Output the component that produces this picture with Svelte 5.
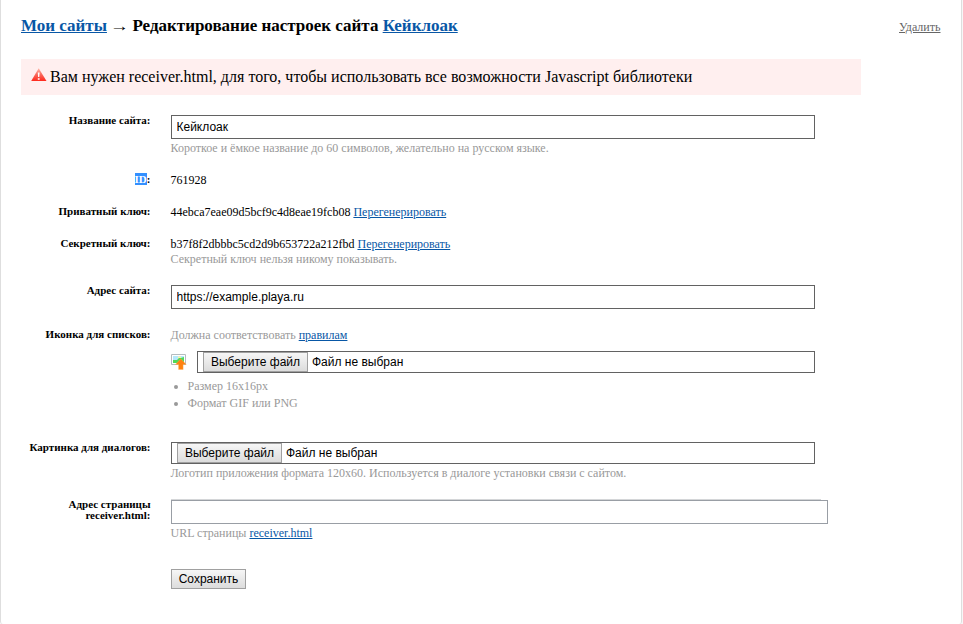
<script>
  let name = $state('Кейклоак');
  let address = $state('https://example.playa.ru');
  let receiver = $state('');
</script>

{#snippet filePicker()}
  <div class="file">
    <button type="button" class="btn choose">Выберите файл</button>
    <span class="nofile">Файл не выбран</span>
  </div>
{/snippet}

<main>
  <header>
    <h1><a href="#sites">Мои сайты</a> <span class="arrow">→</span> Редактирование настроек сайта <a href="#site">Кейклоак</a></h1>
    <a class="delete" href="#delete">Удалить</a>
  </header>

  <div class="alert">
    <svg width="16" height="14" viewBox="0 0 16 14">
      <defs>
        <linearGradient id="warn" x1="0" y1="0" x2="0" y2="1">
          <stop offset="0" stop-color="#ffb8a8" />
          <stop offset=".45" stop-color="#f96e62" />
          <stop offset="1" stop-color="#ff291c" />
        </linearGradient>
      </defs>
      <path d="M7.7.3 15.5 13H.2Z" fill="url(#warn)" />
      <path d="M6.8 4.5h1.8l-.3 4.6H7.1ZM6.8 10.2h1.8v1.6H6.8Z" fill="#fff" />
    </svg>
    <span class="message">Вам нужен receiver.html, для того, чтобы использовать все возможности Javascript библиотеки</span>
  </div>

  <form>
    <div class="row r1">
      <label for="name">Название сайта:</label>
      <div class="field">
        <input id="name" type="text" bind:value={name} />
        <p class="hint">Короткое и ёмкое название до 60 символов, желательно на русском языке.</p>
      </div>
    </div>
    <div class="row r2">
      <span class="label"><mark>ID</mark>:</span>
      <div class="field"><p>761928</p></div>
    </div>
    <div class="row r3">
      <span class="label">Приватный ключ:</span>
      <div class="field"><p>44ebca7eae09d5bcf9c4d8eae19fcb08 <a href="#private">Перегенерировать</a></p></div>
    </div>
    <div class="row r4">
      <span class="label">Секретный ключ:</span>
      <div class="field">
        <p>b37f8f2dbbbc5cd2d9b653722a212fbd <a href="#secret">Перегенерировать</a></p>
        <p class="hint">Секретный ключ нельзя никому показывать.</p>
      </div>
    </div>
    <div class="row r5">
      <label for="address">Адрес сайта:</label>
      <div class="field"><input id="address" type="text" bind:value={address} /></div>
    </div>
    <div class="row r6">
      <span class="label">Иконка для списков:</span>
      <div class="field">
        <p class="hint">Должна соответствовать <a href="#rules">правилам</a></p>
        <div class="upload">
          <svg width="17" height="16" viewBox="0 0 17 16">
            <path d="M.5.5h14v10H.5Z" fill="#fff" stroke="#b4bcbf" />
            <path d="M2 2h11v7H2Z" fill="#b4e9fb" />
            <path d="M2 6h4l2-2h2l3-1v6H2Z" fill="#4fd957" />
            <path d="M7 2.5h3V4H7Z" fill="#fff3a0" />
            <path d="M9.7 4.8 15.2 10.4h-3.1v5.2H7.6v-5.2H4.5Z" fill="#ff8210" stroke="#ffad55" stroke-width=".4" />
          </svg>
          {@render filePicker()}
        </div>
        <ul>
          <li>Размер 16x16px</li>
          <li>Формат GIF или PNG</li>
        </ul>
      </div>
    </div>
    <div class="row r7">
      <span class="label">Картинка для диалогов:</span>
      <div class="field">
        {@render filePicker()}
        <p class="hint">Логотип приложения формата 120x60. Используется в диалоге установки связи с сайтом.</p>
      </div>
    </div>
    <div class="row r8">
      <label for="receiver">Адрес страницы<br />receiver.html:</label>
      <div class="field">
        <div class="rule"></div>
        <input id="receiver" class="wide" type="text" bind:value={receiver} />
        <p class="hint">URL страницы <a href="#receiver">receiver.html</a></p>
      </div>
    </div>
    <button type="button" class="btn save">Сохранить</button>
  </form>
</main>

<style>
  :global(body) { margin: 0; background: #f7f7f7; overflow: hidden; }
  main {
    box-sizing: border-box;
    width: 962px;
    height: 624px;
    padding: 0 20px;
    border: solid #dedede;
    border-width: 0 1px;
    border-radius: 0 0 3px 3px;
    background: #fff;
    color: #000;
    font: 12px/15px "Liberation Serif", "Times New Roman", serif;
  }
  a { color: #0857a6; text-decoration: underline; }
  header { display: flex; justify-content: space-between; height: 59px; }
  h1 { margin: 15px 0 0; font-size: 17px; line-height: 22px; letter-spacing: -.008px; white-space: nowrap; }
  .arrow { display: inline-block; font-weight: 400; transform: scale(1.12, .9); }
  .delete { margin: 20px .5px 0 0; color: #666; }
  .alert {
    display: flex;
    box-sizing: border-box;
    width: 840px;
    height: 36px;
    padding: 9px 10px 0;
    background: #ffefef;
    font-size: 16px;
    line-height: 18px;
    letter-spacing: .006px;
    white-space: nowrap;
  }
  .alert svg { margin-right: 3px; }
  form { margin-top: 20px; }
  .row { display: flex; gap: 20.5px; }
  label, .label { width: 129.5px; font-size: 11px; line-height: 11px; font-weight: 700; text-align: right; }
  mark { background: #3390ff; color: #fff; }
  .r1 { height: 59px; }
  .r2, .r3 { height: 32px; }
  .r4 { height: 47px; }
  .r5 { height: 44px; }
  .r6 { height: 113px; }
  .r7 { height: 57px; }
  .r8 { height: 70px; }
  p { margin: 0 0 0 -.5px; white-space: nowrap; }
  .hint, ul { color: #999; }
  .r1 .hint { margin-top: 2px; }
  .field { width: 644px; }
  .r2 .field, .r3 .field, .r4 .field, .r6 .field { margin-top: -1px; }
  input {
    display: block;
    box-sizing: border-box;
    width: 644px;
    height: 24px;
    margin: 0;
    padding: 0 4.5px;
    border: 1px solid #626262;
    border-radius: 0;
    outline: 0;
    background: #fff;
    color: #000;
    font: 12px "Liberation Sans", Arial, sans-serif;
  }
  .rule { width: 650px; height: 1px; background: #d4d6d8; }
  .wide { width: 657px; border-color: #999ea5; }
  .r7 .hint, .r8 .hint { margin-top: 2px; }
  .r6 .hint { height: 23px; }
  .upload { display: flex; gap: 9px; }
  .upload svg { flex: none; margin-top: 3px; }
  .file {
    box-sizing: border-box;
    display: flex;
    flex: 1;
    align-items: center;
    height: 22px;
    padding-left: 5px;
    border: 1px solid #626262;
    font: 12px/14px "Liberation Sans", Arial, sans-serif;
  }
  .btn {
    box-sizing: border-box;
    height: 20px;
    margin: 0;
    padding: 0;
    border: 1px solid #a0a0a0;
    border-radius: 0;
    background: linear-gradient(#f6f6f6, #dcdcdc);
    color: #000;
    font: 12px/14px "Liberation Sans", Arial, sans-serif;
  }
  .choose { width: 105px; margin-right: 4px; }
  .save { display: block; width: 75px; margin-left: 150px; }
  ul { margin: 5px 0 0; padding: 0 0 0 16.5px; line-height: 17px; }
</style>
